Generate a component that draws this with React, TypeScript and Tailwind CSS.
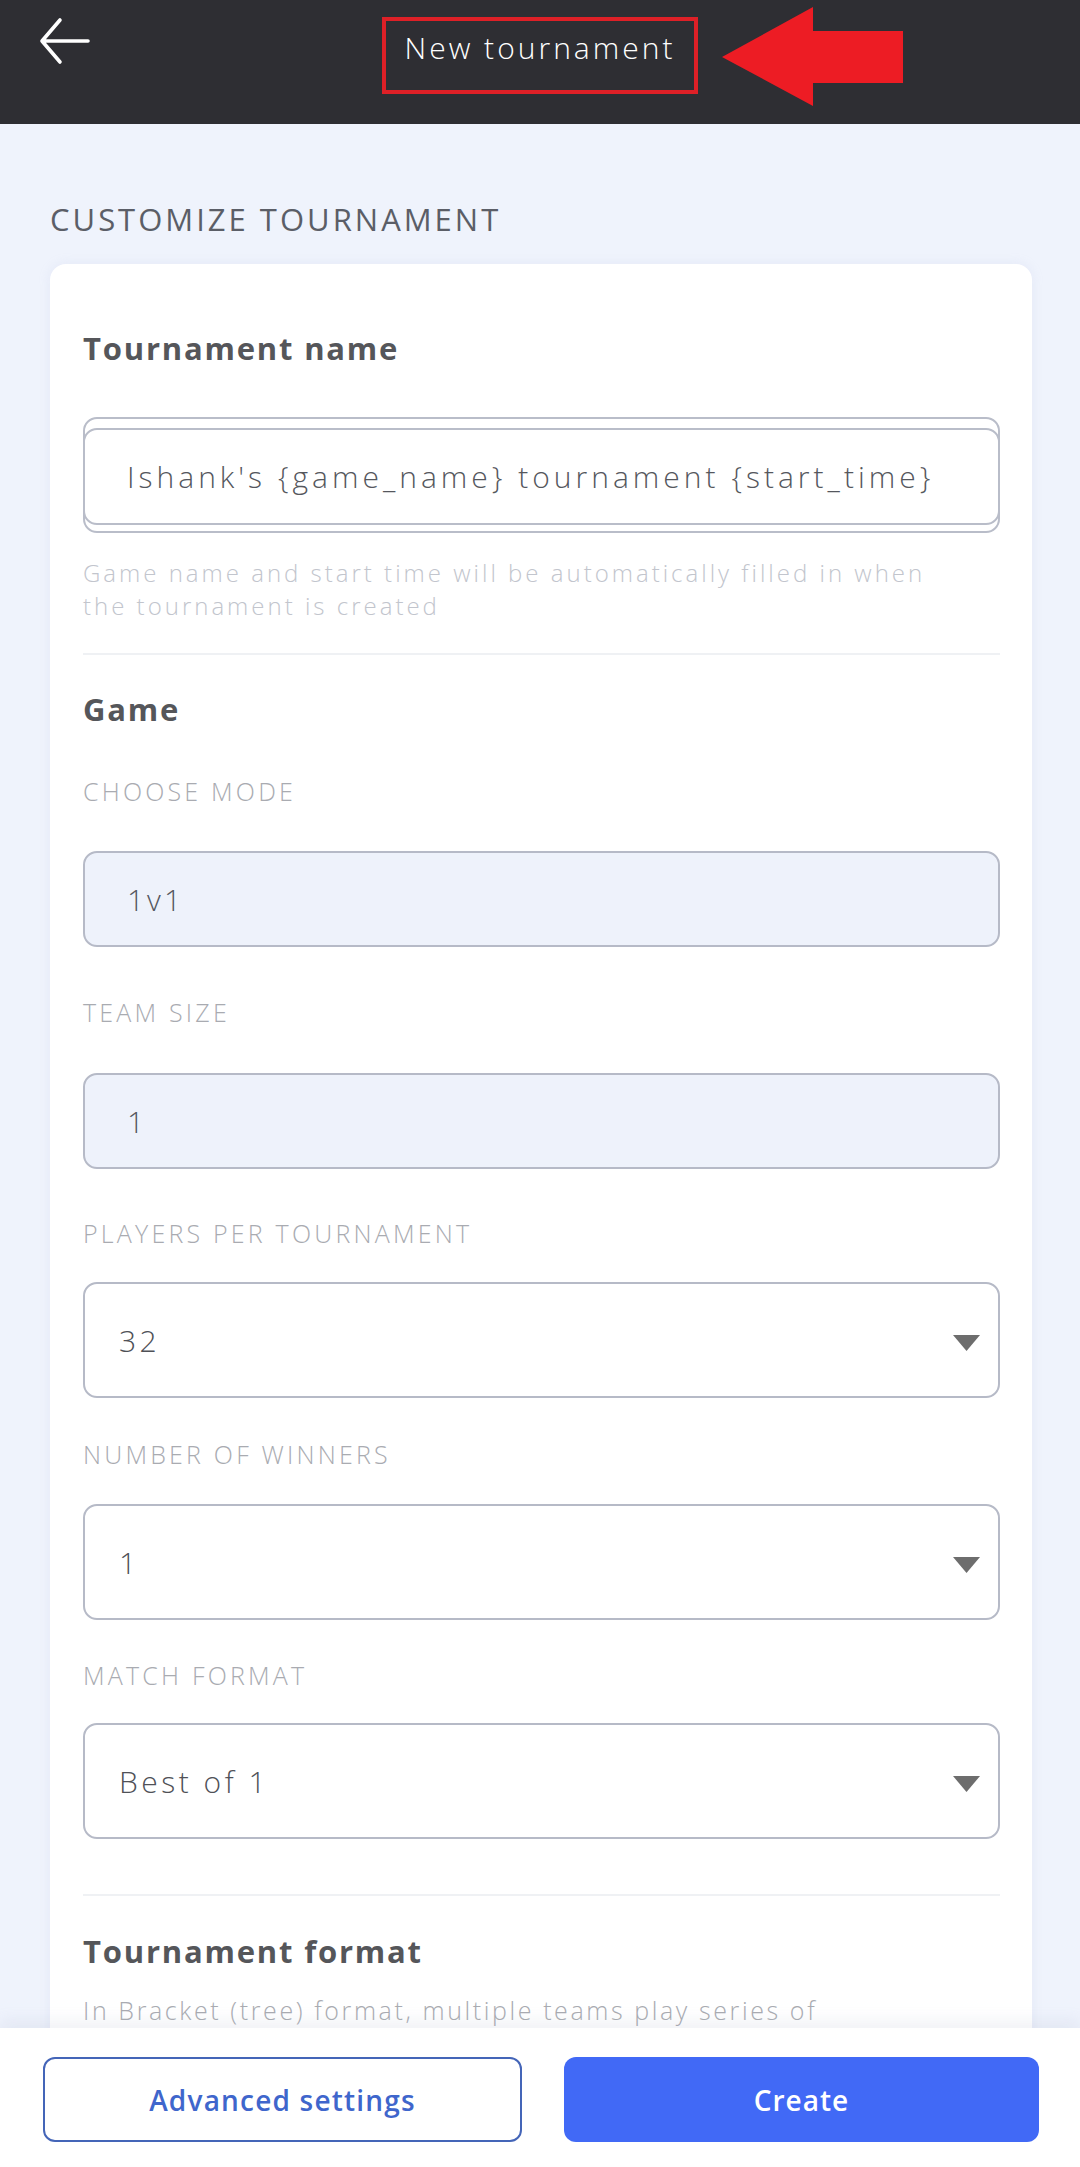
const font = { fontFamily: '"Open Sans", "Noto Sans", sans-serif' };

function FieldLabel({ children }: { children: React.ReactNode }) {
  return (
    <div className="h-[30px] leading-[30px] text-[25px] uppercase text-[#a9abb1] tracking-[3.2px] font-light">
      {children}
    </div>
  );
}

function ReadOnlyBox({ value }: { value: string }) {
  return (
    <div className="h-[96px] rounded-[14px] border-2 border-[#b6bac7] bg-[#eef2fb] flex items-center pl-[42px] text-[30px] tracking-[3px] text-[#555860] font-light">
      {value}
    </div>
  );
}

function SelectBox({ value }: { value: string }) {
  return (
    <div className="h-[116px] rounded-[14px] border-2 border-[#b6bac7] bg-white flex items-center justify-between pl-[34px] pr-[18px] text-[30px] tracking-[3.5px] text-[#4f5157] font-light">
      <span>{value}</span>
      <svg width="27" height="16" viewBox="0 0 27 16" className="mt-[6px]">
        <polygon points="0,0 27,0 13.5,16" fill="#6d6d6d" />
      </svg>
    </div>
  );
}

export default function App() {
  return (
    <div style={font} className="w-[1080px] h-[2167px] flex flex-col bg-[#eff3fc] overflow-hidden">
      {/* top bar */}
      <header className="relative h-[124px] shrink-0 bg-[#2e2e33] flex justify-center pt-[17px]">
        <svg
          width="52"
          height="48"
          viewBox="0 0 52 48"
          className="absolute left-[39px] top-[17px]"
          fill="none"
          stroke="white"
          strokeWidth="3.6"
          strokeLinecap="round"
          strokeLinejoin="round"
        >
          <path d="M3 24 H49 M21 3 L3 24 L21 45" />
        </svg>
        <div className="w-[316px] h-[77px] border-[4px] border-[#de2027] flex justify-center pt-[8px]">
          <span className="text-[30px] leading-[38px] text-white tracking-[3px] font-light">New tournament</span>
        </div>
        <svg width="181" height="99" viewBox="0 0 181 99" className="absolute left-[722px] top-[7px]">
          <polygon points="0,50 91,0 91,24 181,24 181,76 91,76 91,99" fill="#ed1c24" />
        </svg>
      </header>

      {/* scrollable content */}
      <main className="flex-1 overflow-hidden px-[50px] pr-[48px]">
        <h2 className="mt-[78px] text-[31px] leading-[34px] text-[#5b5e67] tracking-[3px]">
          CUSTOMIZE TOURNAMENT
        </h2>

        <section className="mt-[28px] bg-white rounded-[16px] shadow-[0_0_12px_rgba(180,190,220,0.18)] px-[33px] pr-[32px] pt-[66px] pb-[60px]">
          <h3 className="text-[31px] leading-[36px] font-bold tracking-[1.8px] text-[#55565a]">Tournament name</h3>

          <div className="mt-[51px] rounded-[14px] border-2 border-[#b9bdc9] pt-[9px] pb-[6px]">
            <div className="-mx-[2px] h-[97px] rounded-[14px] border-2 border-[#b9bdc9] flex items-center pl-[42px] text-[30px] tracking-[4px] text-[#55575d] font-light whitespace-nowrap">
              Ishank's {"{game_name}"} tournament {"{start_time}"}
            </div>
          </div>

          <p className="mt-[23px] text-[24px] leading-[33px] tracking-[3px] text-[#c2c5cd] font-light">
            Game name and start time will be automatically filled in when
            <br />
            the tournament is created
          </p>

          <div className="mt-[31px] h-[2px] bg-[#eff1f4]" />

          <h3 className="mt-[36px] text-[31px] leading-[36px] font-bold tracking-[1.8px] text-[#55565a]">Game</h3>

          <div className="mt-[49px]">
            <FieldLabel>Choose mode</FieldLabel>
          </div>
          <div className="mt-[45px]">
            <ReadOnlyBox value="1v1" />
          </div>

          <div className="mt-[50px]">
            <FieldLabel>Team size</FieldLabel>
          </div>
          <div className="mt-[46px]">
            <ReadOnlyBox value="1" />
          </div>

          <div className="mt-[49px]">
            <FieldLabel>Players per tournament</FieldLabel>
          </div>
          <div className="mt-[34px]">
            <SelectBox value="32" />
          </div>

          <div className="mt-[41px]">
            <FieldLabel>Number of winners</FieldLabel>
          </div>
          <div className="mt-[35px]">
            <SelectBox value="1" />
          </div>

          <div className="mt-[40px]">
            <FieldLabel>Match format</FieldLabel>
          </div>
          <div className="mt-[33px]">
            <SelectBox value="Best of 1" />
          </div>

          <div className="mt-[55px] h-[2px] bg-[#eff1f4]" />

          <h3 className="mt-[37px] text-[31px] leading-[36px] font-bold tracking-[1.8px] text-[#55565a]">Tournament format</h3>
          <p className="mt-[24px] text-[25px] leading-[34px] tracking-[2.6px] text-[#a9abb1] font-light">
            In Bracket (tree) format, multiple teams play series of
            <br />
            matches until one team remains as the winner.
          </p>
        </section>
      </main>

      {/* bottom action bar */}
      <footer className="h-[139px] shrink-0 bg-white shadow-[0_-8px_14px_rgba(150,160,190,0.12)] flex items-start gap-[42px] pl-[43px] pr-[41px] pt-[29px]">
        <button className="flex-1 h-[85px] rounded-[12px] border-2 border-[#4465b8] bg-white text-[28px] font-semibold tracking-[1.2px] text-[#3f66cc]">
          Advanced settings
        </button>
        <button className="flex-1 h-[85px] rounded-[12px] bg-[#4169f6] text-[28px] font-semibold tracking-[1px] text-white">
          Create
        </button>
      </footer>
    </div>
  );
}
